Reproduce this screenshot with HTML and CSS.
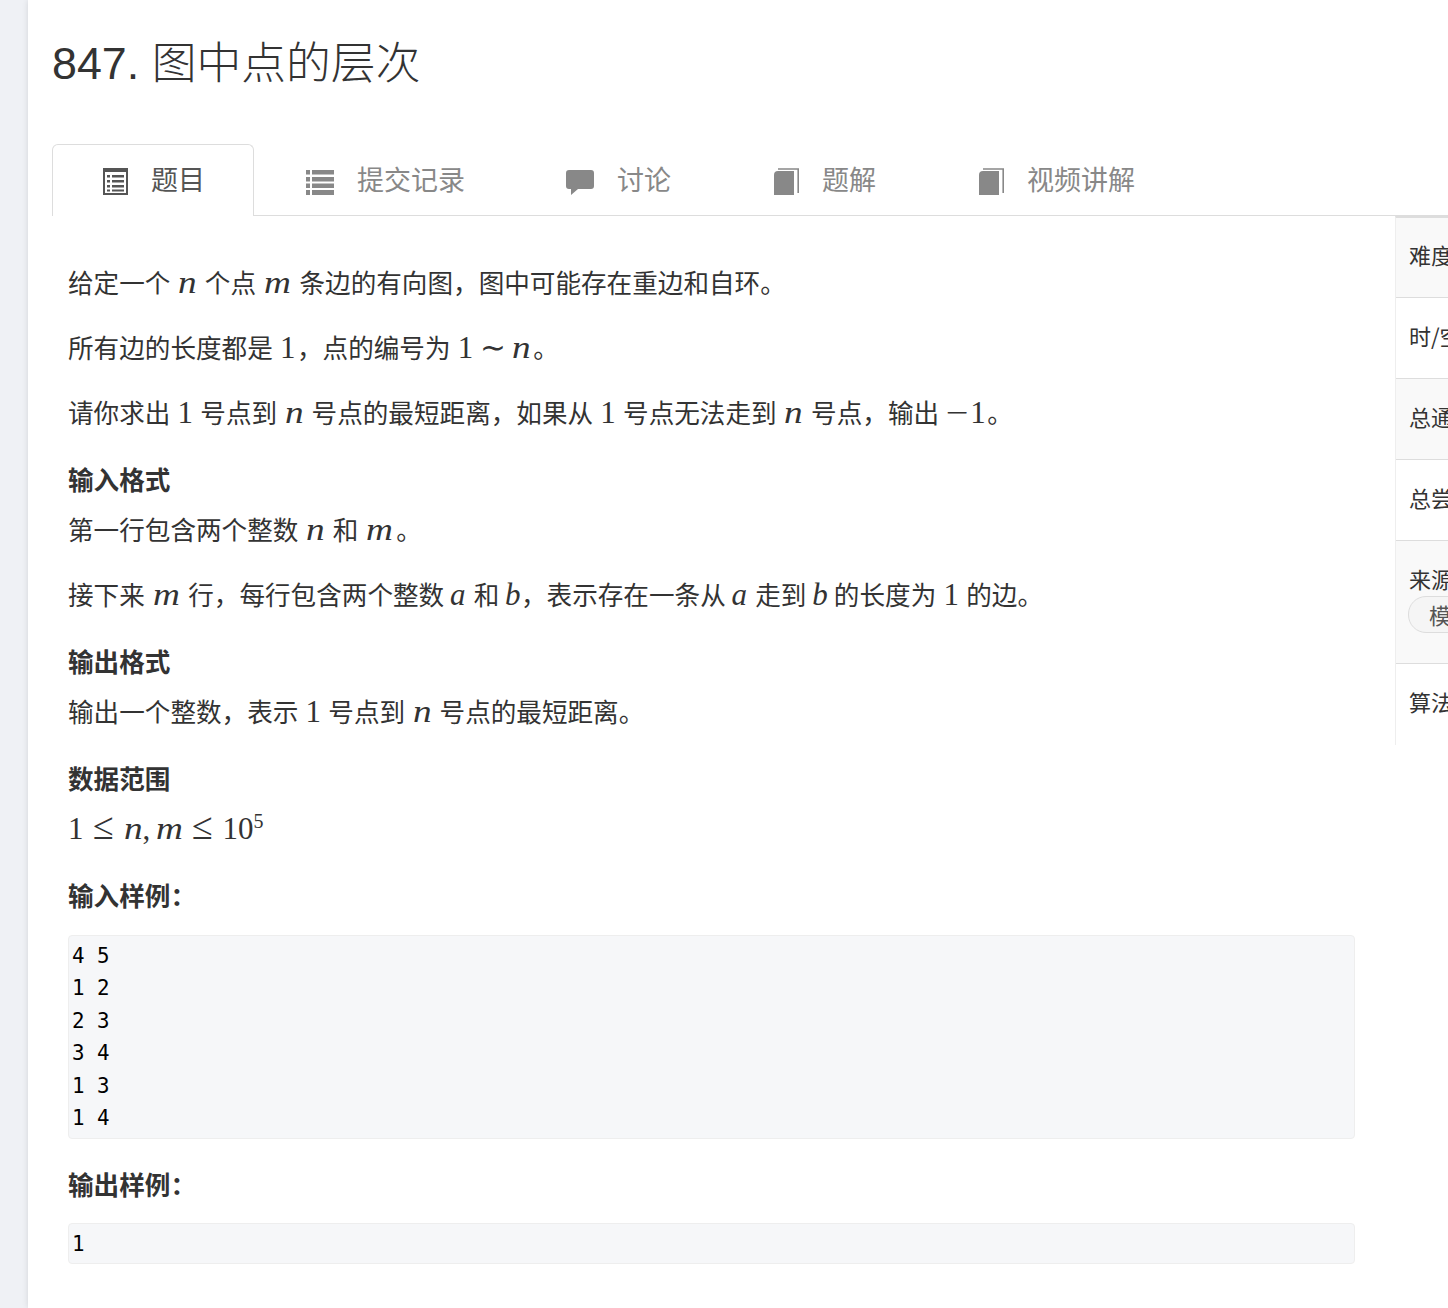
FILE: index.html
```html
<!DOCTYPE html>
<html lang="zh-CN">
<head>
<meta charset="utf-8">
<title>847. 图中点的层次</title>
<link rel="stylesheet" href="styles.css">
</head>
<body>
<div class="rail"></div>
<main class="main">
  <h1 class="title"><span class="num">847. </span>图中点的层次</h1>
  <nav class="tabs">
    <a class="tab active">
      <svg class="ico" width="25" height="27" viewBox="0 0 25 27"><path d="M0 0H25V27H0Z M2 4V25H23V4Z" fill-rule="evenodd"/><path d="M4 7h3v2.500H4Z M9 7h12v2.500H9Z M4 12h3v2.500H4Z M9 12h12v2.500H9Z M4 17h3v2.500H4Z M9 17h12v2.500H9Z M4 21.500h3v2H4Z M9 21.500h12v2H9Z"/></svg>
      <span>题目</span>
    </a>
    <a class="tab">
      <svg class="ico" width="28" height="27" viewBox="0 0 28 27"><path d="M0 2h4v4.500H0Z M6 2h22v4.500H6Z M0 9h4v4.500H0Z M6 9h22v4.500H6Z M0 15.500h4v4.500H0Z M6 15.500h22v4.500H6Z M0 22h4v5H0Z M6 22h22v5H6Z"/></svg>
      <span>提交记录</span>
    </a>
    <a class="tab">
      <svg class="ico" width="28" height="27" viewBox="0 0 28 27"><path d="M3 2H25Q28 2 28 5V18Q28 21 25 21H12L5 27V21H3Q0 21 0 18V5Q0 2 3 2Z"/></svg>
      <span>讨论</span>
    </a>
    <a class="tab">
      <svg class="ico" width="27" height="27" viewBox="-2 0 27 27"><path d="M0 7Q0 3 4 3H20V27H0Z"/><path d="M4 1H24.200V25" fill="none" stroke="#888" stroke-width="1.600"/></svg>
      <span>题解</span>
    </a>
    <a class="tab">
      <svg class="ico" width="27" height="27" viewBox="-2 0 27 27"><path d="M0 7Q0 3 4 3H20V27H0Z"/><path d="M4 1H24.200V25" fill="none" stroke="#888" stroke-width="1.600"/></svg>
      <span>视频讲解</span>
    </a>
  </nav>
  <div class="body">
    <article class="content">
      <p>给定一个 <span class="v n">n</span> 个点 <span class="v mm">m</span> 条边的有向图，图中可能存在重边和自环。</p>
      <p>所有边的长度都是 <span class="d">1</span>，点的编号为 <span class="d">1</span> <span class="d sim">∼</span> <span class="v n">n</span>。</p>
      <p>请你求出 <span class="d">1</span> 号点到 <span class="v n">n</span> 号点的最短距离，如果从 <span class="d">1</span> 号点无法走到 <span class="v n">n</span> 号点，输出 <span class="d minus">−</span><span class="d">1</span>。</p>
      <h4>输入格式</h4>
      <p>第一行包含两个整数 <span class="v n">n</span> 和 <span class="v mm">m</span>。</p>
      <p>接下来 <span class="v mm">m</span> 行，每行包含两个整数 <span class="v a">a</span> 和 <span class="v b">b</span>，表示存在一条从 <span class="v a">a</span> 走到 <span class="v b">b</span> 的长度为 <span class="d">1</span> 的边。</p>
      <h4>输出格式</h4>
      <p>输出一个整数，表示 <span class="d">1</span> 号点到 <span class="v n">n</span> 号点的最短距离。</p>
      <h4>数据范围</h4>
      <p class="range"><span class="d">1</span><span class="d rel">≤</span><span class="v n">n</span><span class="d comma">,</span><span class="v mm">m</span><span class="d rel">≤</span><span class="d">10<sup>5</sup></span></p>
      <h4>输入样例：</h4>
      <pre>4 5
1 2
2 3
3 4
1 3
1 4</pre>
      <h4 class="after">输出样例：</h4>
      <pre class="single">1</pre>
    </article>
    <aside class="side">
      <div class="row">难度：简单</div>
      <div class="row">时/空限制：1s / 256MB</div>
      <div class="row">总通过数：12345</div>
      <div class="row">总尝试数：23456</div>
      <div class="row source">来源：<br><span class="tag">模板题</span></div>
      <div class="row last">算法</div>
    </aside>
  </div>
</main>
</body>
</html>
```
FILE: styles.css
```css
html, body {
  margin: 0;
  height: 1308px;
  overflow: hidden;
}
body {
  display: flex;
  width: 1448px;
  background: #eff1f5;
  color: #333;
  font-family: "Noto Sans CJK SC", "Noto Sans", sans-serif;
}
.rail {
  width: 28px;
  flex: none;
}
.main {
  flex: 1;
  min-width: 0;
  background: #fff;
  padding-left: 24px;
  box-shadow: 0 0 6px rgba(0, 0, 0, .12);
}
.title {
  margin: 0;
  padding-top: 29px;
  height: 144px;
  box-sizing: border-box;
  font-size: 44.800px;
  line-height: 62px;
  font-weight: 300;
  white-space: nowrap;
  color: #333;
}
.num {
  font-family: "Liberation Sans", sans-serif;
}
.tabs {
  display: flex;
  height: 71px;
  border-bottom: 1px solid #ddd;
}
.tab {
  display: flex;
  align-items: center;
  gap: 23px;
  padding: 0 48px 0 51px;
  font-size: 27px;
  line-height: 36px;
  color: #888;
  fill: #888;
  border: 1px solid transparent;
  border-bottom: 0;
  border-radius: 6px 6px 0 0;
  height: 72px;
  box-sizing: border-box;
  margin-bottom: -1px;
}
.tab span {
  position: relative;
  top: -2px;
}
.tab.active {
  padding-left: 50px;
  color: #555;
  fill: #555;
  background: #fff;
  border-color: #ddd;
}
.ico {
  flex: none;
  position: relative;
  top: 1px;
}
.body {
  display: flex;
  align-items: flex-start;
}
.content {
  width: 1343px;
  flex: none;
  box-sizing: border-box;
  padding: 46px 40px 0 16px;
  font-size: 25.600px;
  line-height: 40px;
}
.content p {
  margin: 0 0 25px;
  white-space: nowrap;
}
.content h4 {
  margin: 27px 0 10px;
  font-size: 25.600px;
  line-height: 40px;
  font-weight: 700;
}
.content p.range {
  margin-bottom: 27px;
}
.v, .d {
  font-family: "Liberation Serif", serif;
  font-size: 31px;
  line-height: 0;
}
.v {
  display: inline-block;
  font-style: italic;
  text-align: left;
  margin-left: 2px;
  transform: scaleX(1.2);
  transform-origin: left center;
}
.d {
  margin: 0 1.500px;
}
.n { width: 21px; }
.mm { width: 30px; }
.v.a {
  width: 18px;
  margin-left: 0;
  transform: none;
}
.v.b {
  width: 16px;
  margin-left: 0;
  transform: none;
}
.sim {
  margin: 0 -1px;
}
.minus {
  display: inline-block;
  width: 24px;
  text-align: center;
  margin: 0;
  transform: scaleX(1.3);
}
.range .d {
  margin: 0;
}
.range .v {
  margin: 0;
}
.range .rel {
  display: inline-block;
  width: 22px;
  margin: 0 9px;
  text-align: center;
  font-size: 38px;
}
.range .comma {
  display: inline-block;
  width: 13px;
}
.range .n { width: 19px; }
.range .mm { width: 27px; }
.d sup {
  font-size: 20px;
  line-height: 0;
}
pre {
  margin: 20px 0 0;
  padding: 4px 3px;
  background: #f6f7f9;
  border: 1px solid #eee;
  border-radius: 4px;
  font-family: "DejaVu Sans Mono", monospace;
  font-size: 20.800px;
  line-height: 32.400px;
  color: #000;
}
pre.single {
  margin-top: 19px;
  padding-bottom: 2px;
}
.content h4.after {
  margin-top: 25px;
}
.side {
  flex: 0 0 340px;
  border-left: 1px solid #eee;
  border-top: 2px solid #ddd;
  font-size: 22px;
  line-height: 40px;
  white-space: nowrap;
}
.row {
  padding: 17px 13px 23px;
  border-bottom: 1px solid #ddd;
  background: #fff;
  height: 81px;
  box-sizing: border-box;
}
.row:nth-child(odd) {
  background: #f9f9f9;
}
.row:first-child {
  height: 80px;
  padding-top: 16px;
}
.row.source {
  height: 123px;
  padding-top: 19px;
  line-height: 36px;
}
.row.last {
  border-bottom: 0;
  height: 81px;
}
.tag {
  display: inline-block;
  height: 37px;
  line-height: 34px;
  box-sizing: border-box;
  margin-left: -1px;
  padding: 0 20px;
  border: 1px solid #ddd;
  border-radius: 18px;
  background: #f5f5f5;
  color: #555;
  vertical-align: top;
}
```
